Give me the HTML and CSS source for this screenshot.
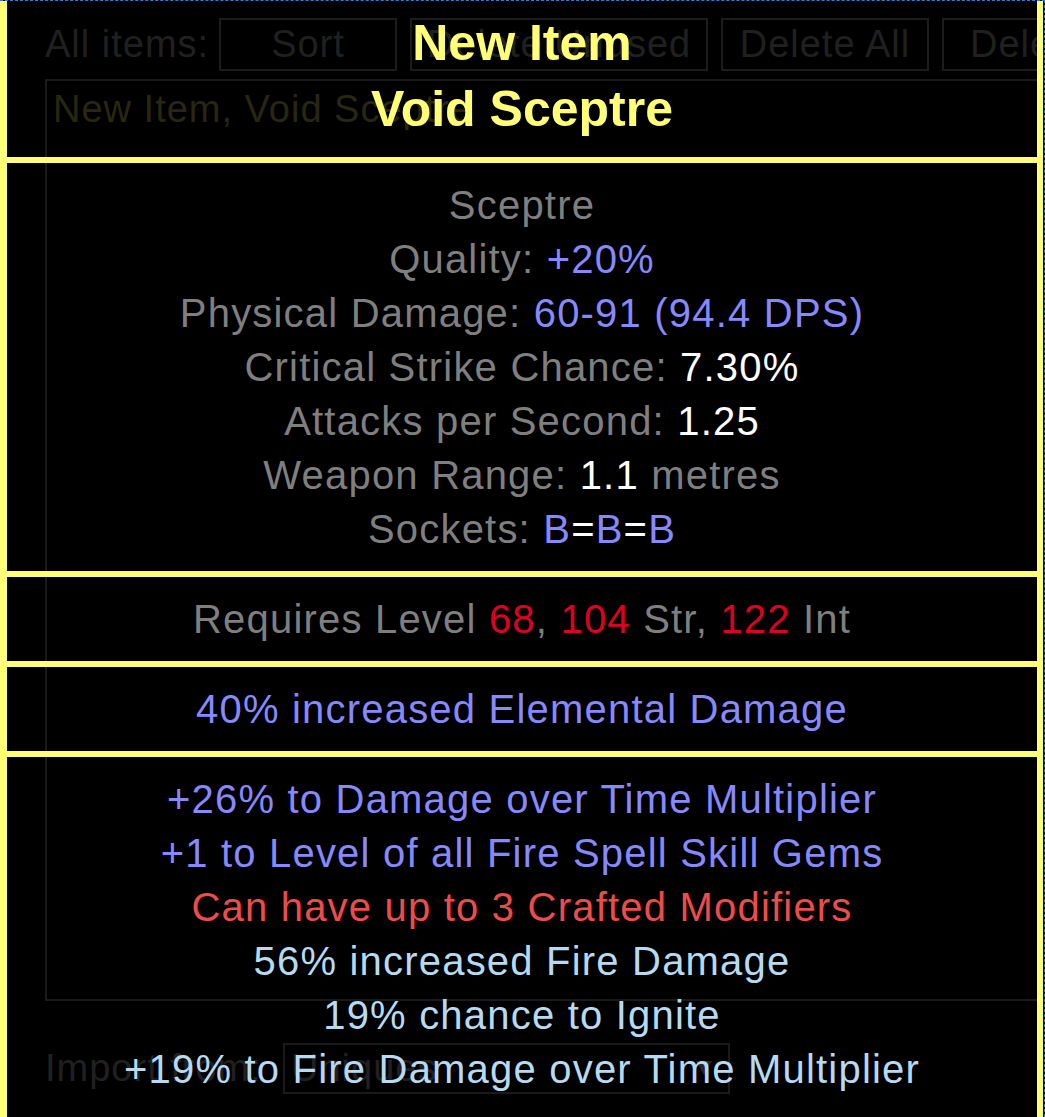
FILE: index.html
```html
<!DOCTYPE html>
<html lang="en">
<head>
    <meta charset="UTF-8">
    <meta name="viewport" content="width=device-width, initial-scale=1.0">
    <title>Items - Void Sceptre</title>
    <link rel="stylesheet" href="styles.css">
</head>
<body>
    <div class="frame">
        <!-- items panel, dimmed behind the tooltip -->
        <div class="items-panel">
            <div class="toolbar">
                <span class="label">All items:</span>
                <div class="btn btn-sort">Sort</div>
                <div class="btn btn-unused">Delete Unused</div>
                <div class="btn btn-all">Delete All</div>
                <div class="btn btn-sel">Delete Selected</div>
            </div>
            <div class="item-list">
                <div class="item-row">New Item, Void Sceptre</div>
            </div>
            <div class="import-row">
                <span class="label">Import from:</span>
                <div class="dropdown">
                    <span>Uniques</span>
                    <span class="arrow"></span>
                </div>
            </div>
        </div>

        <!-- item tooltip, drawn over the panel without a fill -->
        <div class="tooltip">
            <div class="section title">
                <div>New Item</div>
                <div>Void Sceptre</div>
            </div>
            <div class="section">
                <div>Sceptre</div>
                <div>Quality: <span class="magic">+20%</span></div>
                <div>Physical Damage: <span class="magic">60-91 (94.4 DPS)</span></div>
                <div>Critical Strike Chance: <span class="white">7.30%</span></div>
                <div>Attacks per Second: <span class="white">1.25</span></div>
                <div>Weapon Range: <span class="white">1.1</span> metres</div>
                <div>Sockets: <span class="magic">B</span><span class="white">=</span><span class="magic">B</span><span class="white">=</span><span class="magic">B</span></div>
            </div>
            <div class="section">
                <div>Requires Level <span class="neg">68</span>, <span class="neg">104</span> Str, <span class="neg">122</span> Int</div>
            </div>
            <div class="section">
                <div class="magic">40% increased Elemental Damage</div>
            </div>
            <div class="section">
                <div class="magic">+26% to Damage over Time Multiplier</div>
                <div class="magic">+1 to Level of all Fire Spell Skill Gems</div>
                <div class="crafted-limit">Can have up to 3 Crafted Modifiers</div>
                <div class="crafted">56% increased Fire Damage</div>
                <div class="crafted">19% chance to Ignite</div>
                <div class="crafted">+19% to Fire Damage over Time Multiplier</div>
                <div class="crafted">&nbsp;</div>
            </div>
        </div>
    </div>
</body>
</html>
```

FILE: styles.css
```css
body {
    margin: 0;
    background-color: #000;
    font-family: 'Liberation Sans', Arial, sans-serif;
    overflow: hidden;
}
.frame {
    position: relative;
    width: 1045px;
    height: 1117px;
    box-sizing: border-box;
    border-top: 1px dashed #2f7fd0;
    border-right: 1px dashed #2f7fd0;
    overflow: hidden;
}

/* dimmed panel */
.items-panel {
    padding: 17px 0 0 45px;
    font-size: 38px;
    letter-spacing: 1px;
    color: #202020;
}
.toolbar {
    display: flex;
    align-items: center;
    gap: 13px;
    height: 53px;
}
.label {
    width: 161px;
    white-space: nowrap;
}
.btn {
    height: 53px;
    box-sizing: border-box;
    border: 2px solid #1c1c1c;
    display: flex;
    align-items: center;
    justify-content: center;
    white-space: nowrap;
    overflow: hidden;
    flex-shrink: 0;
}
.btn-sort { width: 178px; }
.btn-unused { width: 298px; }
.btn-all { width: 208px; }
.btn-sel { width: 200px; justify-content: flex-start; padding-left: 26px; }
.item-list {
    margin-top: 8px;
    width: 1030px;
    height: 922px;
    box-sizing: border-box;
    border: 2px solid #1a1a1a;
    padding: 4px 6px;
}
.item-row {
    color: #28270f;
    line-height: 48px;
}
.import-row {
    display: flex;
    align-items: center;
    margin-top: 42px;
}
.import-row .label {
    width: 238px;
}
.dropdown {
    position: relative;
    width: 447px;
    height: 51px;
    box-sizing: border-box;
    border: 2px solid #1a1a1a;
    display: flex;
    align-items: center;
    padding-left: 6px;
}
.arrow {
    position: absolute;
    right: 16px;
    top: 16px;
    border-left: 8px solid transparent;
    border-right: 8px solid transparent;
    border-top: 14px solid #262626;
}

/* tooltip */
.tooltip {
    position: absolute;
    left: 0;
    top: -12px;
    width: 1043px;
    box-sizing: border-box;
    border: 6px solid #ffff77;
    border-left-width: 7px;
    font-size: 40px;
    line-height: 54px;
    letter-spacing: 1.2px;
    color: #7f7f7f;
    text-align: center;
}
.section {
    padding: 15px 0;
    white-space: nowrap;
}
.section + .section {
    border-top: 6px solid #ffff77;
}
.title {
    font-size: 50px;
    font-weight: bold;
    line-height: 66px;
    letter-spacing: 0;
    color: #ffff77;
}
.magic { color: #8888ff; }
.white { color: #fff; }
.neg { color: #dd0022; }
.crafted-limit { color: #ee4b4b; }
.crafted { color: #b8daf1; }
```
